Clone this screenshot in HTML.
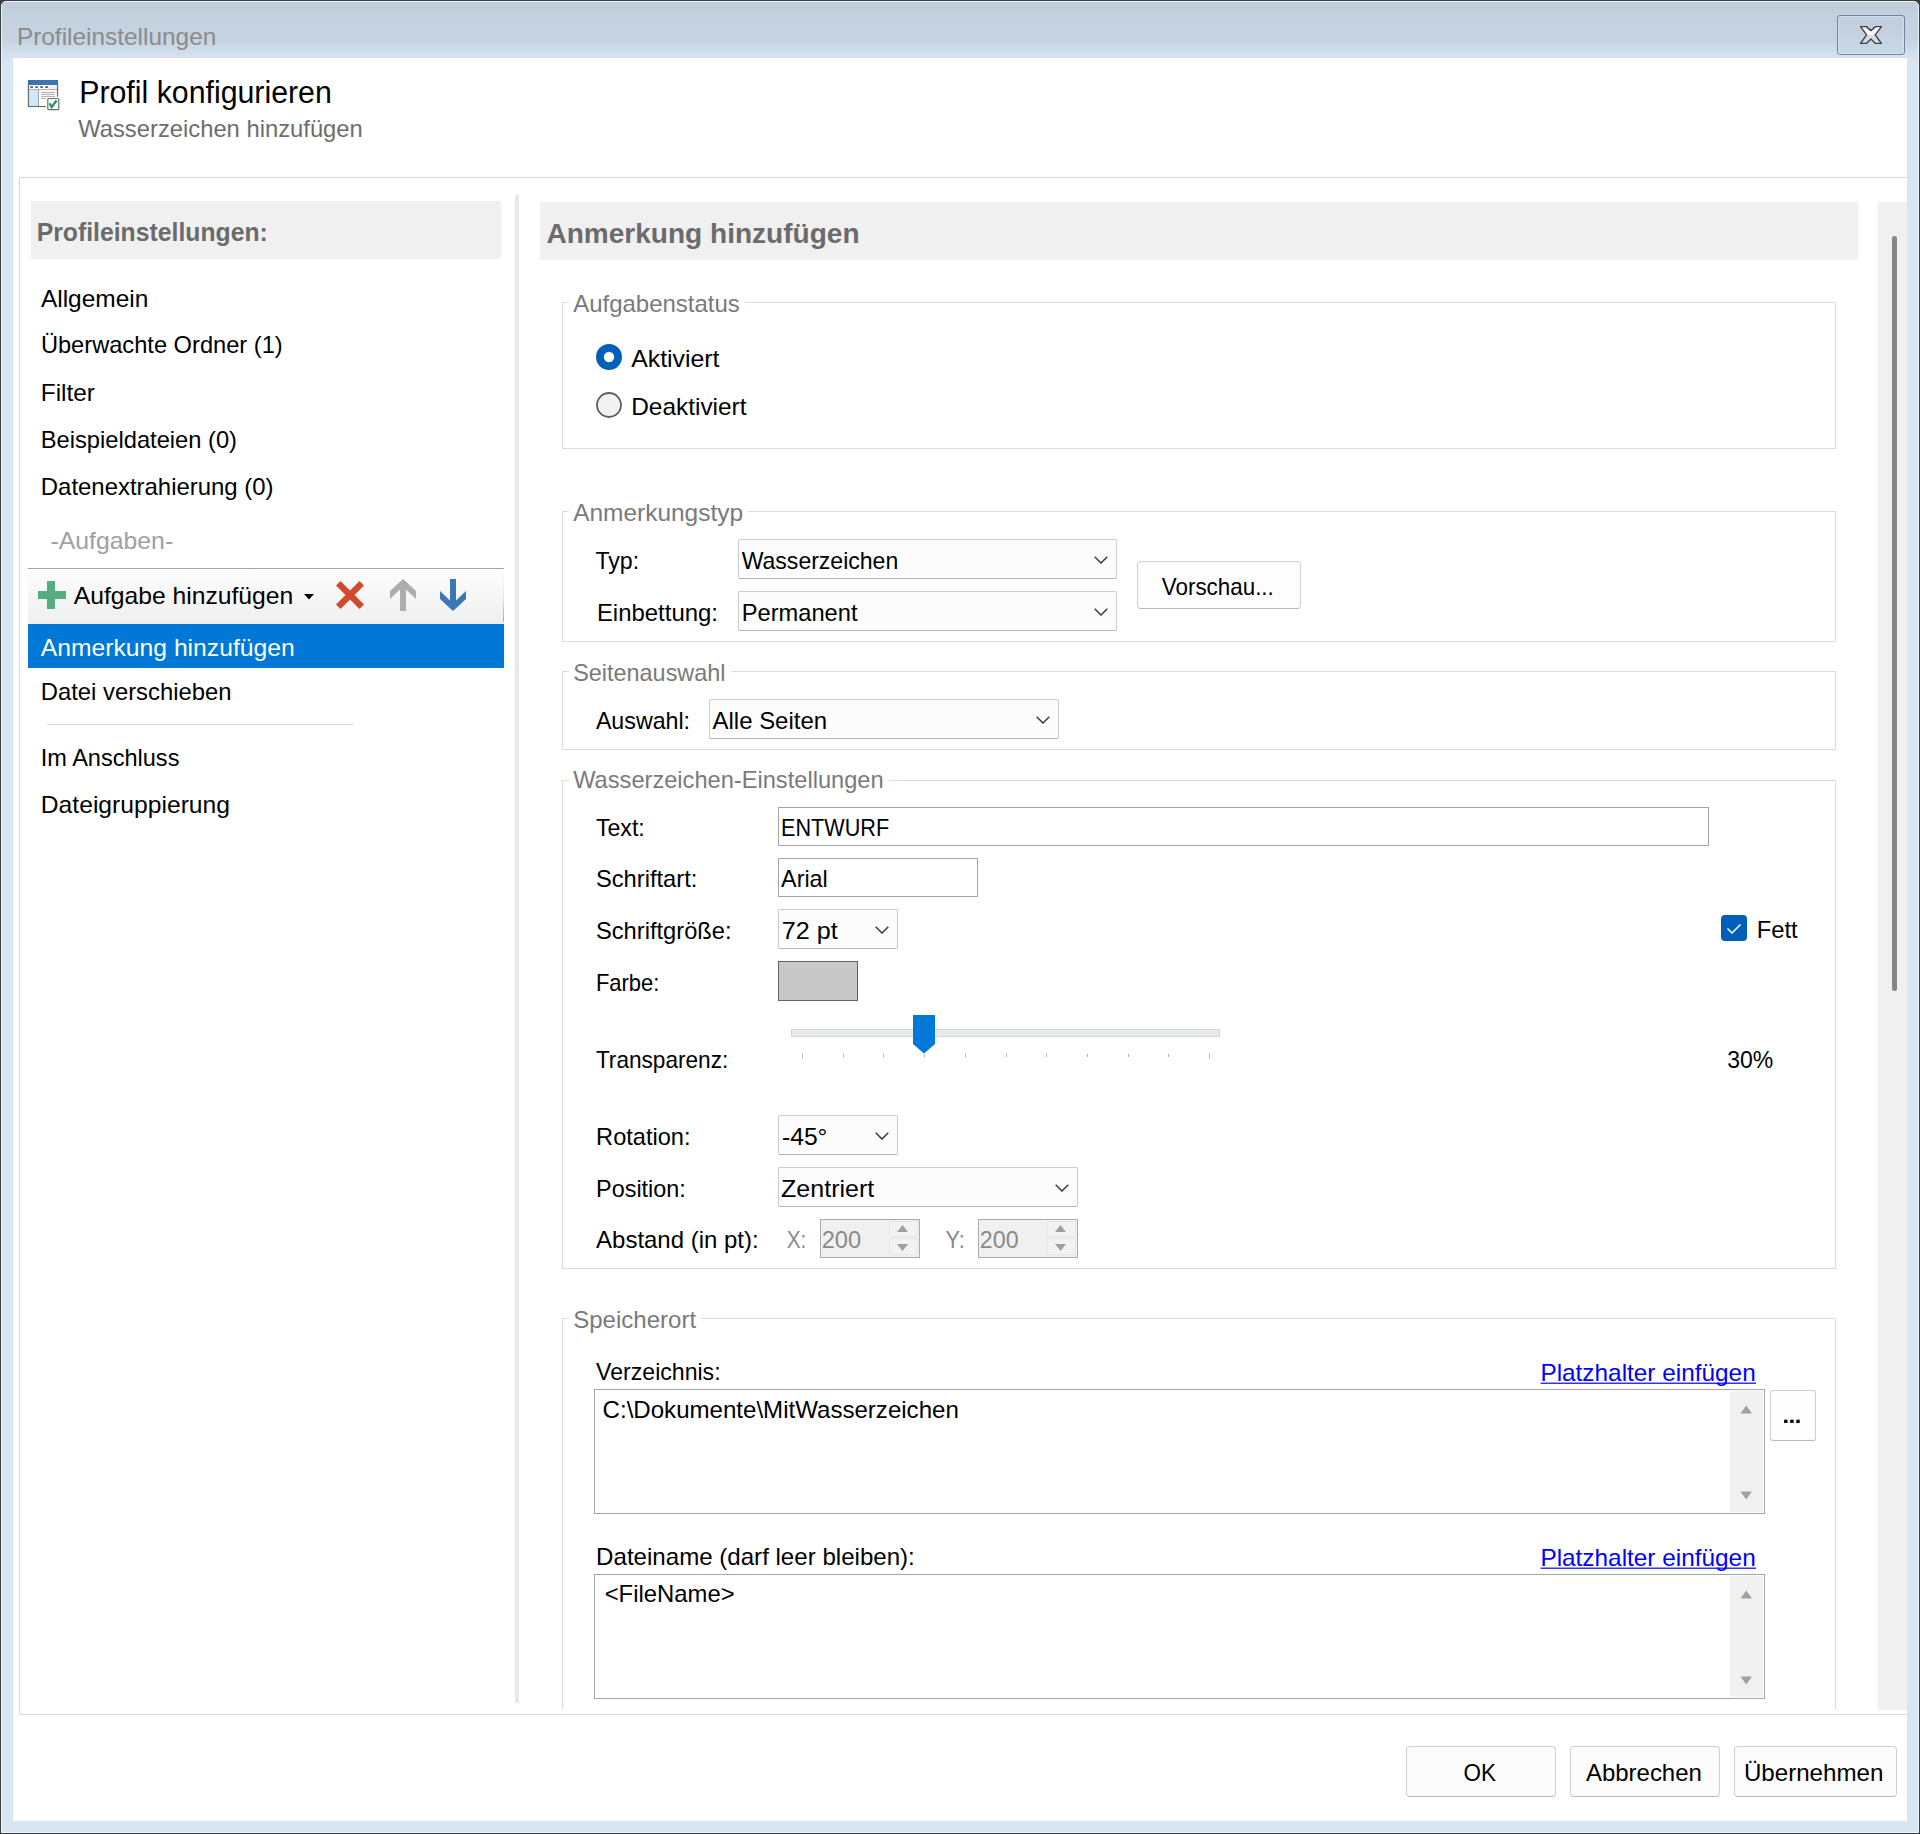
<!DOCTYPE html>
<html><head><meta charset="utf-8"><title>Profileinstellungen</title>
<style>
html,body{margin:0;padding:0;}
body{width:1920px;height:1834px;position:relative;overflow:hidden;background:#3d3d3d;font-family:"Liberation Sans",sans-serif;}
.t{position:absolute;white-space:nowrap;font-family:"Liberation Sans",sans-serif;}
.r{position:absolute;box-sizing:border-box;}
svg{position:absolute;}
</style></head><body>

<div class="r" style="left:1px;top:1px;width:1918px;height:1832px;background:#d8e5f2;border:1px solid #eef4fc;border-radius:5px 5px 0 0;"></div>
<div class="r" style="left:2px;top:2px;width:1916px;height:56px;background:linear-gradient(#bdcbdb 0%,#c3d0de 20%,#c6d3e1 68%,#d5e3f0 100%);border-radius:4px 4px 0 0;"></div>
<div class="r" style="left:13px;top:58px;width:1894px;height:1763px;background:#ffffff;"></div>
<div class="r" style="left:1837px;top:15px;width:68px;height:40px;border:1px solid #74839b;border-radius:3px;background:linear-gradient(#bfcddc,#c6d3e1 60%,#c9d6e4);box-shadow:inset 0 0 0 1px rgba(255,255,255,0.3);"></div>
<svg width="26" height="22" viewBox="0 0 26 22" style="left:1858px;top:24px"><defs><linearGradient id="xg" x1="0" y1="0" x2="0" y2="1"><stop offset="0" stop-color="#ffffff"/><stop offset="0.49" stop-color="#f8f8f8"/><stop offset="0.5" stop-color="#dcdcdc"/><stop offset="1" stop-color="#dadada"/></linearGradient></defs>
<path d="M2.6 2.6 H8.3 L12.9 6.6 L17.5 2.6 H23.4 L17.2 10.9 L23.4 19.4 H17.5 L12.9 15.1 L8.3 19.4 H2.6 L8.6 10.9 Z" fill="url(#xg)" stroke="#3b4152" stroke-width="1.4" stroke-linejoin="round"/></svg>
<svg width="34" height="34" viewBox="0 0 34 34" style="left:27px;top:79px">
<path d="M1.5 18.6 V1.5 H30.5 V17.6 M19 27.5 H1.5 V18" fill="#fff" stroke="#6f6f6f" stroke-width="1.2"/>
<rect x="2" y="10.5" width="28" height="17" fill="#fff"/>
<rect x="1" y="1" width="30" height="5" fill="#3a74b3"/>
<rect x="2" y="6" width="28" height="4.5" fill="#fdfbf9"/>
<rect x="21" y="6.5" width="8.5" height="3.5" fill="#f2f2f2"/>
<rect x="2" y="11" width="9" height="16" fill="#cfeafc"/>
<line x1="11.5" y1="11" x2="11.5" y2="27" stroke="#a0a0a0" stroke-width="1"/>
<line x1="2" y1="10.5" x2="30" y2="10.5" stroke="#b0b0b0" stroke-width="1"/>
<line x1="1.5" y1="6" x2="1.5" y2="27.5" stroke="#6f6f6f" stroke-width="1.2"/>
<line x1="30.5" y1="6" x2="30.5" y2="17.6" stroke="#6f6f6f" stroke-width="1.2"/>
<line x1="1" y1="27.5" x2="19" y2="27.5" stroke="#6f6f6f" stroke-width="1.2"/>
<rect x="3.2" y="7.2" width="2.8" height="1.8" fill="#666"/><rect x="8.2" y="7.2" width="2.8" height="1.8" fill="#666"/><rect x="13.2" y="7.2" width="2.8" height="1.8" fill="#666"/><rect x="18.2" y="7.2" width="2.8" height="1.8" fill="#666"/>
<line x1="14" y1="13.4" x2="28" y2="13.4" stroke="#acacac"/><line x1="14" y1="15.4" x2="28" y2="15.4" stroke="#acacac"/><line x1="14" y1="17.4" x2="28" y2="17.4" stroke="#acacac"/><line x1="14" y1="19.5" x2="19" y2="19.5" stroke="#acacac"/>
<rect x="20.8" y="19.5" width="11" height="11.2" rx="1" fill="#fff" stroke="#6f6f6f" stroke-width="1.2"/>
<path d="M22.6 24.3 L24.6 28.2 L29.6 21.5" fill="none" stroke="#1e9a65" stroke-width="2.3" stroke-linejoin="miter"/>
</svg>
<div class="r" style="left:19px;top:177px;width:1888px;height:1538px;border-left:1px solid #d9d9d9;border-top:1px solid #d9d9d9;border-bottom:1px solid #d9d9d9;"></div>
<div class="r" style="left:31px;top:201px;width:470px;height:58px;background:#f0f0f0;"></div>
<div class="r" style="left:28px;top:568px;width:476px;height:56px;border-top:1px solid #a6a6a6;background:linear-gradient(#fdfdfd,#efefef);"></div>
<div class="r" style="left:503px;top:572px;width:1px;height:50px;background:linear-gradient(#f8f8f8,#e6e6e6 50%,#a6a6a6);"></div>
<svg width="30" height="30" style="left:37px;top:580px"><path d="M10 1 H18 V11 H29 V19 H18 V29 H10 V19 H1 V11 H10 Z" fill="#56ad84"/></svg>
<svg width="10" height="6" style="left:304px;top:594px"><path d="M0 0 H10 L5 5.5 Z" fill="#000"/></svg>
<svg width="30" height="30" style="left:335px;top:580px"><path d="M1 5.5 L5.5 1 L15 10.5 L24.5 1 L29 5.5 L19.5 15 L29 24.5 L24.5 29 L15 19.5 L5.5 29 L1 24.5 L10.5 15 Z" fill="#d24a2e"/></svg>
<svg width="28" height="34" style="left:389px;top:578px"><path d="M14 1 L27 13 V21 L17 11.5 V33 H11 V11.5 L1 21 V13 Z" fill="#adadad"/></svg>
<svg width="28" height="34" style="left:439px;top:578px"><path d="M11 1 H17 V22.5 L27 13 V21 L14 33 L1 21 V13 L11 22.5 Z" fill="#3b76b6"/></svg>
<div class="r" style="left:28px;top:624px;width:476px;height:44px;background:#0078d7;"></div>
<div class="r" style="left:47px;top:724px;width:307px;height:1px;background:#d7d7d7;"></div>
<div class="r" style="left:515px;top:195px;width:4px;height:1508px;background:#e8e8e8;"></div>
<div class="r" style="left:540px;top:202px;width:1318px;height:58px;background:#f0f0f0;"></div>
<div class="r" style="left:1878px;top:202px;width:29px;height:1508px;background:#f0f0f0;"></div>
<div class="r" style="left:1892px;top:236px;width:5px;height:755px;background:#868686;border-radius:3px;"></div>
<div class="r" style="left:562px;top:302px;width:1px;height:147px;background:#dcdcdc"></div>
<div class="r" style="left:1835px;top:302px;width:1px;height:147px;background:#dcdcdc"></div>
<div class="r" style="left:562px;top:448px;width:1274px;height:1px;background:#dcdcdc"></div>
<div class="r" style="left:562px;top:302px;width:7px;height:1px;background:#dcdcdc"></div>
<div class="r" style="left:745px;top:302px;width:1090px;height:1px;background:#dcdcdc"></div>
<svg width="28" height="28" style="left:595px;top:343px"><circle cx="14" cy="14" r="9.1" fill="#fff" stroke="#005fb8" stroke-width="7.8"/></svg>
<svg width="28" height="28" style="left:595px;top:391px"><circle cx="14" cy="14" r="12" fill="#f2f2f2" stroke="#5f5f5f" stroke-width="1.8"/></svg>
<div class="r" style="left:562px;top:511px;width:1px;height:131px;background:#dcdcdc"></div>
<div class="r" style="left:1835px;top:511px;width:1px;height:131px;background:#dcdcdc"></div>
<div class="r" style="left:562px;top:641px;width:1274px;height:1px;background:#dcdcdc"></div>
<div class="r" style="left:562px;top:511px;width:7px;height:1px;background:#dcdcdc"></div>
<div class="r" style="left:748px;top:511px;width:1087px;height:1px;background:#dcdcdc"></div>
<div class="r" style="left:738px;top:539px;width:379px;height:40px;background:#fcfcfc;border:1px solid #cdcdcd;border-bottom-color:#b5b5b5;box-sizing:border-box;border-radius:2px;"></div>
<svg width="14" height="8" viewBox="0 0 14 8" style="position:absolute;left:1094px;top:556px"><path d="M0.7 0.7 L7 7 L13.3 0.7" fill="none" stroke="#3c3c3c" stroke-width="1.5"/></svg>
<div class="r" style="left:738px;top:591px;width:379px;height:40px;background:#fcfcfc;border:1px solid #cdcdcd;border-bottom-color:#b5b5b5;box-sizing:border-box;border-radius:2px;"></div>
<svg width="14" height="8" viewBox="0 0 14 8" style="position:absolute;left:1094px;top:608px"><path d="M0.7 0.7 L7 7 L13.3 0.7" fill="none" stroke="#3c3c3c" stroke-width="1.5"/></svg>
<div class="r" style="left:1137px;top:561px;width:164px;height:48px;background:#fdfdfd;border:1px solid #d0d0d0;border-bottom-color:#b9b9b9;border-radius:4px;"></div>
<div class="r" style="left:562px;top:671px;width:1px;height:79px;background:#dcdcdc"></div>
<div class="r" style="left:1835px;top:671px;width:1px;height:79px;background:#dcdcdc"></div>
<div class="r" style="left:562px;top:749px;width:1274px;height:1px;background:#dcdcdc"></div>
<div class="r" style="left:562px;top:671px;width:7px;height:1px;background:#dcdcdc"></div>
<div class="r" style="left:731px;top:671px;width:1104px;height:1px;background:#dcdcdc"></div>
<div class="r" style="left:709px;top:699px;width:350px;height:40px;background:#fcfcfc;border:1px solid #cdcdcd;border-bottom-color:#b5b5b5;box-sizing:border-box;border-radius:2px;"></div>
<svg width="14" height="8" viewBox="0 0 14 8" style="position:absolute;left:1036px;top:716px"><path d="M0.7 0.7 L7 7 L13.3 0.7" fill="none" stroke="#3c3c3c" stroke-width="1.5"/></svg>
<div class="r" style="left:562px;top:780px;width:1px;height:489px;background:#dcdcdc"></div>
<div class="r" style="left:1835px;top:780px;width:1px;height:489px;background:#dcdcdc"></div>
<div class="r" style="left:562px;top:1268px;width:1274px;height:1px;background:#dcdcdc"></div>
<div class="r" style="left:562px;top:780px;width:7px;height:1px;background:#dcdcdc"></div>
<div class="r" style="left:889px;top:780px;width:946px;height:1px;background:#dcdcdc"></div>
<div class="r" style="left:778px;top:807px;width:931px;height:39px;background:#fff;border:1px solid #a2a5aa;"></div>
<div class="r" style="left:778px;top:858px;width:200px;height:39px;background:#fff;border:1px solid #a2a5aa;"></div>
<div class="r" style="left:778px;top:909px;width:120px;height:40px;background:#fcfcfc;border:1px solid #cdcdcd;border-bottom-color:#b5b5b5;box-sizing:border-box;border-radius:2px;"></div>
<svg width="14" height="8" viewBox="0 0 14 8" style="position:absolute;left:875px;top:926px"><path d="M0.7 0.7 L7 7 L13.3 0.7" fill="none" stroke="#3c3c3c" stroke-width="1.5"/></svg>
<div class="r" style="left:1721px;top:915px;width:26px;height:26px;background:#005fb8;border-radius:4px;"></div>
<svg width="26" height="26" style="left:1721px;top:915px"><path d="M6.5 13.5 L11 18 L19.5 9.5" fill="none" stroke="#fff" stroke-width="1.5"/></svg>
<div class="r" style="left:778px;top:961px;width:80px;height:40px;background:#c8c8c8;border:1px solid #646464;"></div>
<div class="r" style="left:791px;top:1029px;width:429px;height:8px;background:#e7eaea;border:1px solid #d6d6d6;"></div>
<svg width="24" height="40" style="left:912px;top:1014px"><path d="M1 1 H23 V30 L12 39.5 L1 30 Z" fill="#0078d7"/></svg>
<svg width="440" height="5" style="left:790px;top:1054px"><rect x="12" y="0" width="1" height="4" fill="#b0b0b0"/><rect x="53" y="0" width="1" height="3" fill="#b0b0b0"/><rect x="93" y="0" width="1" height="3" fill="#b0b0b0"/><rect x="134" y="0" width="1" height="3" fill="#b0b0b0"/><rect x="175" y="0" width="1" height="3" fill="#b0b0b0"/><rect x="216" y="0" width="1" height="3" fill="#b0b0b0"/><rect x="256" y="0" width="1" height="3" fill="#b0b0b0"/><rect x="297" y="0" width="1" height="3" fill="#b0b0b0"/><rect x="338" y="0" width="1" height="3" fill="#b0b0b0"/><rect x="378" y="0" width="1" height="3" fill="#b0b0b0"/><rect x="419" y="0" width="1" height="4" fill="#b0b0b0"/></svg>
<div class="r" style="left:778px;top:1115px;width:120px;height:40px;background:#fcfcfc;border:1px solid #cdcdcd;border-bottom-color:#b5b5b5;box-sizing:border-box;border-radius:2px;"></div>
<svg width="14" height="8" viewBox="0 0 14 8" style="position:absolute;left:875px;top:1132px"><path d="M0.7 0.7 L7 7 L13.3 0.7" fill="none" stroke="#3c3c3c" stroke-width="1.5"/></svg>
<div class="r" style="left:778px;top:1167px;width:300px;height:40px;background:#fcfcfc;border:1px solid #cdcdcd;border-bottom-color:#b5b5b5;box-sizing:border-box;border-radius:2px;"></div>
<svg width="14" height="8" viewBox="0 0 14 8" style="position:absolute;left:1055px;top:1184px"><path d="M0.7 0.7 L7 7 L13.3 0.7" fill="none" stroke="#3c3c3c" stroke-width="1.5"/></svg>
<div class="r" style="left:820px;top:1219px;width:100px;height:39px;background:#f0f0f0;border:1px solid #a8aaad;"></div>
<div class="r" style="left:889px;top:1221px;width:29px;height:16px;background:#f2f2f2;border:1px solid #e6e6e6;border-radius:1px;"></div>
<div class="r" style="left:889px;top:1238px;width:29px;height:17px;background:#f2f2f2;border:1px solid #e6e6e6;border-radius:1px;"></div>
<svg width="12" height="8" style="left:897px;top:1225px"><path d="M0 7 L5.5 0 L11 7 Z" fill="#a0a0a0"/></svg>
<svg width="12" height="8" style="left:897px;top:1244px"><path d="M0 0 L11 0 L5.5 7 Z" fill="#a0a0a0"/></svg>
<div class="r" style="left:978px;top:1219px;width:100px;height:39px;background:#f0f0f0;border:1px solid #a8aaad;"></div>
<div class="r" style="left:1047px;top:1221px;width:29px;height:16px;background:#f2f2f2;border:1px solid #e6e6e6;border-radius:1px;"></div>
<div class="r" style="left:1047px;top:1238px;width:29px;height:17px;background:#f2f2f2;border:1px solid #e6e6e6;border-radius:1px;"></div>
<svg width="12" height="8" style="left:1055px;top:1225px"><path d="M0 7 L5.5 0 L11 7 Z" fill="#a0a0a0"/></svg>
<svg width="12" height="8" style="left:1055px;top:1244px"><path d="M0 0 L11 0 L5.5 7 Z" fill="#a0a0a0"/></svg>
<div class="r" style="left:562px;top:1318px;width:1px;height:392px;background:#dcdcdc"></div>
<div class="r" style="left:1835px;top:1318px;width:1px;height:392px;background:#dcdcdc"></div>
<div class="r" style="left:562px;top:1318px;width:7px;height:1px;background:#dcdcdc"></div>
<div class="r" style="left:701px;top:1318px;width:1134px;height:1px;background:#dcdcdc"></div>
<div class="r" style="left:594px;top:1389px;width:1171px;height:125px;background:#fff;border:1px solid #a2a5aa;"></div>
<div class="r" style="left:1730px;top:1391px;width:33px;height:121px;background:#f0f0f0;"></div>
<svg width="14" height="10" style="left:1740px;top:1405px"><path d="M0.5 8.5 L6.25 0.5 L12 8.5 Z" fill="#a0a0a0"/></svg>
<svg width="14" height="10" style="left:1740px;top:1491px"><path d="M0.5 0.5 L12 0.5 L6.25 8.5 Z" fill="#a0a0a0"/></svg>
<div class="r" style="left:1770px;top:1390px;width:46px;height:51px;background:#fdfdfd;border:1px solid #d0d0d0;border-bottom-color:#b9b9b9;border-radius:3px;"></div>
<svg width="20" height="8" style="left:1783px;top:1417px"><rect x="1.1" y="2.7" width="3.4" height="3.3" fill="#000"/><rect x="7.2" y="2.7" width="3.4" height="3.3" fill="#000"/><rect x="13.3" y="2.7" width="3.4" height="3.3" fill="#000"/></svg>
<div class="r" style="left:594px;top:1574px;width:1171px;height:125px;background:#fff;border:1px solid #a2a5aa;"></div>
<div class="r" style="left:1730px;top:1576px;width:33px;height:121px;background:#f0f0f0;"></div>
<svg width="14" height="10" style="left:1740px;top:1590px"><path d="M0.5 8.5 L6.25 0.5 L12 8.5 Z" fill="#a0a0a0"/></svg>
<svg width="14" height="10" style="left:1740px;top:1676px"><path d="M0.5 0.5 L12 0.5 L6.25 8.5 Z" fill="#a0a0a0"/></svg>
<div class="r" style="left:1406px;top:1746px;width:150px;height:51px;background:#fcfcfc;border:1px solid #d0d0d0;border-bottom-color:#b9b9b9;border-radius:4px;"></div>
<div class="r" style="left:1570px;top:1746px;width:150px;height:51px;background:#fcfcfc;border:1px solid #d0d0d0;border-bottom-color:#b9b9b9;border-radius:4px;"></div>
<div class="r" style="left:1734px;top:1746px;width:163px;height:51px;background:#fcfcfc;border:1px solid #d0d0d0;border-bottom-color:#b9b9b9;border-radius:4px;"></div>
<svg width="1920" height="1834" style="left:0;top:0" font-family="Liberation Sans, sans-serif"><text x="16.90" y="45" font-size="24" fill="#8b8b8b" textLength="199.40" lengthAdjust="spacingAndGlyphs">Profileinstellungen</text><text x="79.20" y="103" font-size="31" fill="#000" textLength="252.61" lengthAdjust="spacingAndGlyphs">Profil konfigurieren</text><text x="78.20" y="137" font-size="24" fill="#6d6d6d" textLength="284.59" lengthAdjust="spacingAndGlyphs">Wasserzeichen hinzufügen</text><text x="36.70" y="240.5" font-size="25" fill="#6b6b6b" font-weight="bold" textLength="231.10" lengthAdjust="spacingAndGlyphs">Profileinstellungen:</text><text x="40.90" y="307.3" font-size="24" fill="#000" textLength="107.40" lengthAdjust="spacingAndGlyphs">Allgemein</text><text x="40.90" y="353" font-size="24" fill="#000" textLength="241.80" lengthAdjust="spacingAndGlyphs">Überwachte Ordner (1)</text><text x="40.80" y="400.8" font-size="24" fill="#000" textLength="54.20" lengthAdjust="spacingAndGlyphs">Filter</text><text x="40.80" y="448" font-size="24" fill="#000" textLength="196.19" lengthAdjust="spacingAndGlyphs">Beispieldateien (0)</text><text x="40.80" y="495" font-size="24" fill="#000" textLength="232.79" lengthAdjust="spacingAndGlyphs">Datenextrahierung (0)</text><text x="50.40" y="548.8" font-size="24" fill="#a0a0a0" textLength="122.79" lengthAdjust="spacingAndGlyphs">-Aufgaben-</text><text x="73.70" y="604.2" font-size="24" fill="#000" textLength="219.59" lengthAdjust="spacingAndGlyphs">Aufgabe hinzufügen</text><text x="40.80" y="655.7" font-size="24" fill="#ffffff" textLength="253.89" lengthAdjust="spacingAndGlyphs">Anmerkung hinzufügen</text><text x="40.80" y="699.8" font-size="24" fill="#000" textLength="190.61" lengthAdjust="spacingAndGlyphs">Datei verschieben</text><text x="40.80" y="766" font-size="24" fill="#000" textLength="138.60" lengthAdjust="spacingAndGlyphs">Im Anschluss</text><text x="40.80" y="813" font-size="24" fill="#000" textLength="189.20" lengthAdjust="spacingAndGlyphs">Dateigruppierung</text><text x="546.40" y="243" font-size="28" fill="#6b6b6b" font-weight="bold" textLength="313.20" lengthAdjust="spacingAndGlyphs">Anmerkung hinzufügen</text><text x="573.20" y="312" font-size="24" fill="#7a7a7a" textLength="166.59" lengthAdjust="spacingAndGlyphs">Aufgabenstatus</text><text x="631.20" y="367" font-size="24" fill="#000" textLength="88.35" lengthAdjust="spacingAndGlyphs">Aktiviert</text><text x="631.20" y="415" font-size="24" fill="#000" textLength="115.34" lengthAdjust="spacingAndGlyphs">Deaktiviert</text><text x="573.20" y="520.6" font-size="24" fill="#7a7a7a" textLength="169.80" lengthAdjust="spacingAndGlyphs">Anmerkungstyp</text><text x="595.45" y="569.1" font-size="24" fill="#000" textLength="43.74" lengthAdjust="spacingAndGlyphs">Typ:</text><text x="596.90" y="620.8" font-size="24" fill="#000" textLength="121.09" lengthAdjust="spacingAndGlyphs">Einbettung:</text><text x="741.70" y="569.4" font-size="24" fill="#000" textLength="156.50" lengthAdjust="spacingAndGlyphs">Wasserzeichen</text><text x="741.80" y="621" font-size="24" fill="#000" textLength="115.69" lengthAdjust="spacingAndGlyphs">Permanent</text><text x="1161.80" y="595.2" font-size="24" fill="#000" textLength="112.00" lengthAdjust="spacingAndGlyphs">Vorschau...</text><text x="573.20" y="681" font-size="24" fill="#7a7a7a" textLength="152.31" lengthAdjust="spacingAndGlyphs">Seitenauswahl</text><text x="595.90" y="728.6" font-size="24" fill="#000" textLength="94.19" lengthAdjust="spacingAndGlyphs">Auswahl:</text><text x="712.50" y="728.6" font-size="24" fill="#000" textLength="114.60" lengthAdjust="spacingAndGlyphs">Alle Seiten</text><text x="573.20" y="788.4" font-size="24" fill="#7a7a7a" textLength="310.41" lengthAdjust="spacingAndGlyphs">Wasserzeichen-Einstellungen</text><text x="595.90" y="835.8" font-size="24" fill="#000" textLength="48.90" lengthAdjust="spacingAndGlyphs">Text:</text><text x="781.10" y="835.8" font-size="24" fill="#000" textLength="108.00" lengthAdjust="spacingAndGlyphs">ENTWURF</text><text x="595.90" y="886.9" font-size="24" fill="#000" textLength="101.50" lengthAdjust="spacingAndGlyphs">Schriftart:</text><text x="781.10" y="886.9" font-size="24" fill="#000" textLength="46.69" lengthAdjust="spacingAndGlyphs">Arial</text><text x="595.90" y="938.6" font-size="24" fill="#000" textLength="135.70" lengthAdjust="spacingAndGlyphs">Schriftgröße:</text><text x="781.80" y="938.6" font-size="24" fill="#000" textLength="55.90" lengthAdjust="spacingAndGlyphs">72 pt</text><text x="1756.70" y="937.75" font-size="24" fill="#000" textLength="40.99" lengthAdjust="spacingAndGlyphs">Fett</text><text x="595.90" y="991" font-size="24" fill="#000" textLength="63.50" lengthAdjust="spacingAndGlyphs">Farbe:</text><text x="595.90" y="1068" font-size="24" fill="#000" textLength="132.39" lengthAdjust="spacingAndGlyphs">Transparenz:</text><text x="1727.30" y="1067.5" font-size="24" fill="#000" textLength="46.01" lengthAdjust="spacingAndGlyphs">30%</text><text x="596.10" y="1145.3" font-size="24" fill="#000" textLength="94.41" lengthAdjust="spacingAndGlyphs">Rotation:</text><text x="782.00" y="1145.3" font-size="24" fill="#000" textLength="45.41" lengthAdjust="spacingAndGlyphs">-45°</text><text x="596.10" y="1196.9" font-size="24" fill="#000" textLength="89.71" lengthAdjust="spacingAndGlyphs">Position:</text><text x="781.10" y="1196.9" font-size="24" fill="#000" textLength="93.10" lengthAdjust="spacingAndGlyphs">Zentriert</text><text x="596.10" y="1247.8" font-size="24" fill="#000" textLength="162.51" lengthAdjust="spacingAndGlyphs">Abstand (in pt):</text><text x="786.70" y="1247.8" font-size="24" fill="#8a8a8a" textLength="19.70" lengthAdjust="spacingAndGlyphs">X:</text><text x="821.70" y="1247.8" font-size="24" fill="#8a8a8a" textLength="39.41" lengthAdjust="spacingAndGlyphs">200</text><text x="945.45" y="1247.8" font-size="24" fill="#8a8a8a" textLength="19.34" lengthAdjust="spacingAndGlyphs">Y:</text><text x="979.80" y="1247.8" font-size="24" fill="#8a8a8a" textLength="38.81" lengthAdjust="spacingAndGlyphs">200</text><text x="573.20" y="1327.8" font-size="24" fill="#7a7a7a" textLength="122.90" lengthAdjust="spacingAndGlyphs">Speicherort</text><text x="596.10" y="1379.8" font-size="24" fill="#000" textLength="124.49" lengthAdjust="spacingAndGlyphs">Verzeichnis:</text><text x="1540.40" y="1380.6" font-size="24" fill="#0000ff" textLength="215.31" lengthAdjust="spacingAndGlyphs">Platzhalter einfügen</text><rect x="1540.70" y="1382.6" width="215.30" height="1.2" fill="#0000ff"/><text x="602.60" y="1417.6" font-size="24" fill="#000" textLength="356.21" lengthAdjust="spacingAndGlyphs">C:\Dokumente\MitWasserzeichen</text><text x="596.10" y="1564.7" font-size="24" fill="#000" textLength="318.70" lengthAdjust="spacingAndGlyphs">Dateiname (darf leer bleiben):</text><text x="1540.40" y="1565.6" font-size="24" fill="#0000ff" textLength="215.31" lengthAdjust="spacingAndGlyphs">Platzhalter einfügen</text><rect x="1540.70" y="1567.6" width="215.30" height="1.2" fill="#0000ff"/><text x="604.70" y="1602" font-size="24" fill="#000" textLength="130.00" lengthAdjust="spacingAndGlyphs">&lt;FileName&gt;</text><text x="1463.60" y="1780.6" font-size="24" fill="#000" textLength="32.50" lengthAdjust="spacingAndGlyphs">OK</text><text x="1585.90" y="1780.6" font-size="24" fill="#000" textLength="116.00" lengthAdjust="spacingAndGlyphs">Abbrechen</text><text x="1743.90" y="1780.6" font-size="24" fill="#000" textLength="139.41" lengthAdjust="spacingAndGlyphs">Übernehmen</text></svg>
</body></html>
